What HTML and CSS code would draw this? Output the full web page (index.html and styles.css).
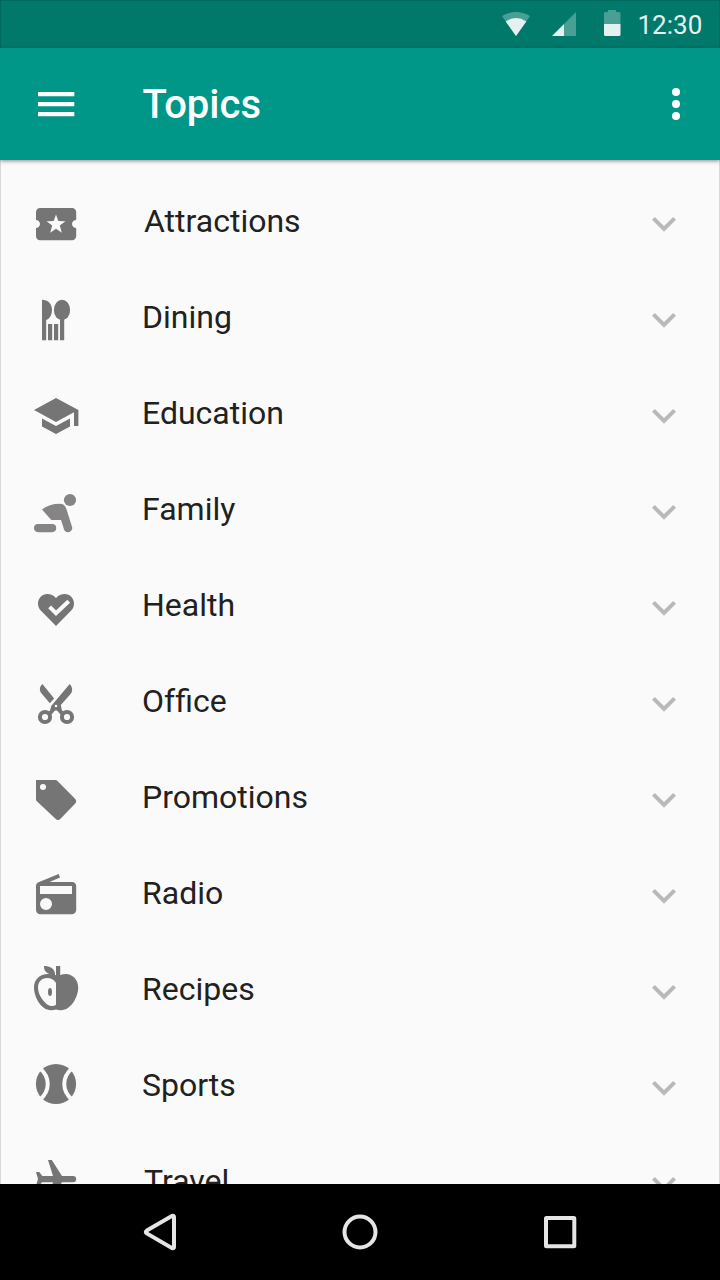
FILE: index.html
```html
<!DOCTYPE html>
<html lang="en">
<head>
<meta charset="utf-8">
<title>Topics</title>
<link rel="stylesheet" href="styles.css">
</head>
<body>
<svg class="defs" aria-hidden="true">
  <symbol id="chevron" viewBox="0 0 48 48"><path d="M33.2 17 24 26.100l-9.200-9.100L12 19.800l12 12 12-12z"/></symbol>
</svg>
<div class="screen">
  <header class="status-bar">
    <svg class="status-icons" viewBox="0 0 120 28">
      <path opacity=".32" d="M0 6Q14-2 28 6L14 26z"/>
      <path d="M3.7 11.4Q14 4.6 24.3 11.4L14 26z"/>
      <path opacity=".32" d="M62 14 74 2v24H62z"/>
      <path d="M50 26 62 14v12z"/>
      <path opacity=".32" d="M102 14V3.6q0-1.6 1.6-1.6H106V0h8v2h2.9q1.6 0 1.6 1.6V14z"/>
      <path d="M102 14h16.5v10.4q0 1.6-1.6 1.6h-13.3q-1.6 0-1.6-1.6z"/>
    </svg>
    <span class="clock">12:30</span>
  </header>
  <div class="app-bar">
    <svg class="icon" viewBox="0 0 48 48"><path d="M6 12h36.3v4.2H6zM6 22h36.3v4.2H6zM6 32h36.3v4.2H6z"/></svg>
    <h1 class="title">Topics</h1>
    <svg class="icon more" viewBox="0 0 48 48"><circle cx="24" cy="12" r="4"/><circle cx="24" cy="24" r="4"/><circle cx="24" cy="36" r="4"/></svg>
  </div>
  <main class="topics">
    <div class="topic">
      <svg class="icon" viewBox="0 0 48 48"><path fill-rule="evenodd" d="M40 24c0-2.2 1.8-4 4.2-4v-8c0-2.2-1.8-4-4-4H8c-2.2 0-4 1.8-4 4v8c2.2 0 4 1.8 4 4s-1.8 4-4 4v8.2c0 2.2 1.8 4 4 4h32.2c2.2 0 4-1.8 4-4V28c-2.400 0-4.200-1.800-4.200-4zM24 14.600l2.300 6.300 7.100.3-5.600 4.300 2 7.300-5.800-4-5.800 4 2-7.300-5.600-4.300 7.100-.3z"/></svg>
      <span class="label inset">Attractions</span><svg class="icon chevron"><use href="#chevron"/></svg>
    </div>
    <div class="topic">
      <svg class="icon" viewBox="0 0 48 48"><path d="M10 3.700c6 0 10 4 10 10.300 0 5-2.500 9-5.800 10v20.200H10zM16 28h4.200v16.200H16zM22 28h4.200v16.200H22zM28 22h4.200v22.200H28z"/><ellipse cx="30" cy="14" rx="8.100" ry="10.200"/></svg>
      <span class="label">Dining</span><svg class="icon chevron"><use href="#chevron"/></svg>
    </div>
    <div class="topic">
      <svg class="icon" viewBox="0 0 48 48"><path d="M10 26.400v8L24 42l14-7.600v-8L24 34zM24 6 2 18l22 12 18-9.800V34h4.400V18z"/></svg>
      <span class="label">Education</span><svg class="icon chevron"><use href="#chevron"/></svg>
    </div>
    <div class="topic">
      <svg class="icon pale" viewBox="0 0 48 48"><circle cx="38" cy="12" r="6.100"/><rect x="2" y="36" width="22.200" height="8.200" rx="4.100"/><path d="M10 21.400Q17 15.800 28 15.800C32 15.800 33.700 18.700 34.700 22L40 38.800C41.500 43 36 46 33 43 32 42 31.700 40.500 31.300 39L29 32h-9.700z"/></svg>
      <span class="label">Family</span><svg class="icon chevron"><use href="#chevron"/></svg>
    </div>
    <div class="topic">
      <svg class="icon" viewBox="0 0 48 48"><path d="M24 42 9 26.800C7 24.800 6 22.400 6 19.500 6 14.200 10.200 10 15.200 10c3.500 0 6.500 1.400 8.800 4 2.300-2.600 5.300-4 8.800-4 5 0 9.200 4.200 9.200 9.500 0 2.900-1 5.300-3 7.300z"/><path class="knockout" d="m17.600 22.900 6.400 6.300 12.700-12"/></svg>
      <span class="label">Health</span><svg class="icon chevron"><use href="#chevron"/></svg>
    </div>
    <div class="topic">
      <svg class="icon" viewBox="0 0 48 48"><path d="M10.400 4C7.200 7 7.300 10.800 9.600 13.500l8.200 9.800 4.300-4.700z"/><path fill-rule="evenodd" d="m37.700 4-18.500 22-1 4.200-3.200 3.300 3.600 2 4.400-5h2l4.400 5 3.600-2-3.200-3.500-1-5L38.600 14c2.200-2.700 2.200-6.700-.9-10zM24 24.700a1.300 1.300 0 1 0 0 2.600 1.300 1.300 0 0 0 0-2.600z"/><circle class="ring" cx="13" cy="37" r="5.100"/><circle class="ring" cx="35" cy="37" r="5.100"/></svg>
      <span class="label"><span class="split">Of</span>fice</span><svg class="icon chevron"><use href="#chevron"/></svg>
    </div>
    <div class="topic">
      <svg class="icon" viewBox="0 0 48 48"><path fill-rule="evenodd" d="M4 4h19.500q1 0 1.700.7l17.800 18q2.400 2.500 0 5L28.500 42.800q-2.500 2.400-5 0L4.600 24.900Q4 24.300 4 23.300zM11 8a3 3 0 1 0 0 6 3 3 0 0 0 0-6z"/></svg>
      <span class="label">Promotions</span><svg class="icon chevron"><use href="#chevron"/></svg>
    </div>
    <div class="topic">
      <svg class="icon" viewBox="0 0 48 48"><path fill-rule="evenodd" d="M6.500 10.300C5 10.900 4 12.300 4 14v24c0 2.200 1.800 4.200 4 4.200h32.200c2.200 0 4-2 4-4.200V14c0-2.200-1.800-4-4-4H17.500L28 5.600 26.700 2zM14 38a6 6 0 1 1 0-12 6 6 0 0 1 0 12zM8 14h32v8H8z"/></svg>
      <span class="label">Radio</span><svg class="icon chevron"><use href="#chevron"/></svg>
    </div>
    <div class="topic">
      <svg class="icon" viewBox="0 0 48 48"><path fill-rule="evenodd" d="M24 7.300Q20 5.600 15 6C7 6.500 2 12 2 19.500 2 29 9 42.200 19 42.200q3 0 5-.7 2 .7 5 .7C39 42.200 46.200 29 46.200 19.500 46.200 12 41 6.300 34 6q-3 0-5.800 1V-2H24zM24 15V36.800q-2 1.600-5 1.200C12.500 36.800 6 27 6 19.500c0-5.500 3.500-9.500 9-9.500q6 0 9 5z"/><path d="M12-2C18-2.500 23.500 1 23 7.300 17 7 11.500 4 12-2z"/><ellipse cx="18" cy="24" rx="2" ry="4"/></svg>
      <span class="label">Recipes</span><svg class="icon chevron"><use href="#chevron"/></svg>
    </div>
    <div class="topic">
      <svg class="icon" viewBox="0 0 48 48"><circle cx="24" cy="20" r="20.100"/><path class="seam" d="M7.500 4C18.500 13 18.500 27 7.500 36M40.500 4C29.500 13 29.500 27 40.500 36"/></svg>
      <span class="label">Sports</span><svg class="icon chevron"><use href="#chevron"/></svg>
    </div>
    <div class="topic">
      <svg class="icon" viewBox="0 0 48 48"><path d="M16 0h3.800L30 15.900h11a3.200 3.200 0 0 1 0 6.400H30L19.800 38H16l5-15.700H10L7 26H4l2-7-2-7h3.300l3 3.900H21z"/></svg>
      <span class="label inset">Travel</span><svg class="icon chevron"><use href="#chevron"/></svg>
    </div>
  </main>
  <nav class="nav-bar">
    <svg class="icon" viewBox="0 0 48 48"><path d="M10.800 22.600 36.200 7.800Q38 7.200 38 9v30q0 1.800-1.800 1.200L10.800 25.400q-2-1.400 0-2.800z"/></svg>
    <svg class="icon" viewBox="0 0 48 48"><circle cx="24" cy="24" r="15.500"/></svg>
    <svg class="icon" viewBox="0 0 48 48"><rect x="10" y="10" width="28.300" height="28.300" rx=".5"/></svg>
  </nav>
</div>
</body>
</html>
```
FILE: styles.css
```css
* { box-sizing: border-box; }
body { margin: 0; font-family: Roboto, "Noto Sans", sans-serif; }
.defs { display: none; }

.screen {
  position: relative;
  display: flex;
  flex-direction: column;
  width: 720px;
  height: 1280px;
  overflow: hidden;
  background: #fafafa;
}
/* hairline frame over every surface */
.screen::after {
  content: "";
  position: absolute;
  inset: 0;
  border: 1px solid rgba(0, 0, 0, .13);
  pointer-events: none;
}

.icon { display: block; flex: none; width: 48px; height: 48px; overflow: visible; }

.status-bar {
  display: flex;
  flex: none;
  align-items: center;
  gap: 15.500px;
  height: 48px;
  padding-left: 502px;
  background: #00796b;
  color: #e5f1f0;
}
.status-icons { flex: none; width: 120px; height: 28px; fill: #e5f1f0; }
.clock { padding-top: 2px; font-size: 26px; line-height: 30px; white-space: nowrap; }

.app-bar {
  z-index: 1;
  display: flex;
  flex: none;
  align-items: center;
  height: 112px;
  padding: 0 20px 0 32px;
  background: #009688;
  box-shadow: 0 1px 4px rgba(0, 0, 0, .45);
  color: #fff;
  fill: #fff;
}
.title { flex: 1; margin: 0 0 0 62.500px; padding-top: 2px; font-size: 40px; font-weight: 500; line-height: 48px; }

.topics { flex: 1; min-height: 0; padding-top: 16px; overflow: hidden; }
.topic {
  display: flex;
  align-items: center;
  height: 96px;
  padding: 0 32px;
  fill: #757575;
}
.label {
  flex: 1;
  padding: 0 0 6px 62px;
  color: #212121;
  font-size: 32px;
  line-height: 40px;
}
.split { font-variant-ligatures: none; }
.inset { padding-left: 64px; }
.pale { fill: #868484; }
.chevron { fill: #b9b9b9; }
.knockout { fill: none; stroke: #fafafa; stroke-width: 4; }
.ring { fill: none; stroke: #757575; stroke-width: 4; }
.seam { fill: none; stroke: #fafafa; stroke-width: 4; }

.nav-bar {
  display: flex;
  flex: none;
  align-items: center;
  justify-content: center;
  gap: 152px;
  height: 96px;
  background: #000;
  fill: none;
  stroke: #e5e5e5;
  stroke-width: 4;
}
```
